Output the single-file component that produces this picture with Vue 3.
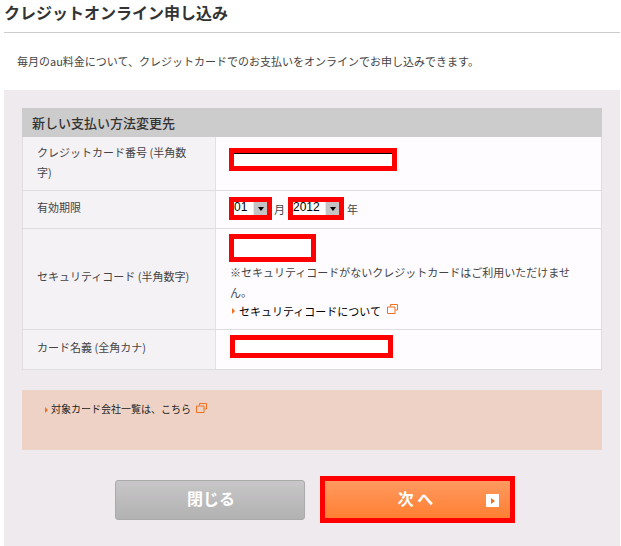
<template>
  <div class="page">
    <h1 class="title">クレジットオンライン申し込み</h1>
    <p class="lead">毎月のau料金について、クレジットカードでのお支払いをオンラインでお申し込みできます。</p>
    <section class="panel">
      <div class="form">
        <h2 class="form-head">新しい支払い方法変更先</h2>
        <div class="row row-card">
          <div class="label">クレジットカード番号 (半角数字)</div>
          <div class="field"><div class="box box-card"></div></div>
        </div>
        <div class="row row-exp">
          <div class="label">有効期限</div>
          <div class="field exp">
            <div class="box select sel-month"><span class="val">01</span><span class="arrow"><i></i></span></div>
            <span class="unit">月</span>
            <div class="box select sel-year"><span class="val">2012</span><span class="arrow"><i></i></span></div>
            <span class="unit">年</span>
          </div>
        </div>
        <div class="row row-sec">
          <div class="label">セキュリティコード (半角数字)</div>
          <div class="field sec">
            <div class="box box-sec"></div>
            <p class="note">※セキュリティコードがないクレジットカードはご利用いただけません。</p>
            <div class="link">
              <span class="tri"></span><span>セキュリティコードについて</span>
              <svg class="ext" width="11" height="10" viewBox="0 0 11 10"><path d="M3.5 .5h7v5.5h-2M3.5 .5v2M.5 3h7.5v6.5H.5z" fill="none" stroke="#f07020"/></svg>
            </div>
          </div>
        </div>
        <div class="row row-name">
          <div class="label">カード名義 (全角カナ)</div>
          <div class="field"><div class="box box-name"></div></div>
        </div>
      </div>
      <div class="callout">
        <span class="tri"></span><span>対象カード会社一覧は、こちら</span>
        <svg class="ext ext2" width="11" height="10" viewBox="0 0 11 10"><path d="M3.5 .5h7v5.5h-2M3.5 .5v2M.5 3h7.5v6.5H.5z" fill="none" stroke="#f07020"/></svg>
      </div>
      <div class="actions">
        <button class="btn close" type="button">閉じる</button>
        <div class="next-frame">
          <button class="btn next" type="button">次 へ<span class="go"><span class="go-tri"></span></span></button>
        </div>
      </div>
    </section>
  </div>
</template>

<script setup>
</script>

<style>
html, body { margin: 0; background: #fff; }
</style>

<style scoped>
.page {
  width: 621px;
  height: 546px;
  overflow: hidden;
  background: #fff;
  font-family: "Noto Sans CJK JP", "Liberation Sans", sans-serif;
  font-size: 11px;
  color: #444;
}
.title {
  margin: 0 1px 0 4px;
  height: 32px;
  border-bottom: 1px solid #ccc;
  font-size: 16px;
  font-weight: 700;
  line-height: 25px;
  color: #333;
}
.lead {
  margin: 0;
  padding-left: 17px;
  height: 57px;
  line-height: 56px;
  color: #444;
}
.panel {
  margin-left: 4px;
  width: 616px;
  height: 456px;
  padding: 18px 18px 0;
  box-sizing: border-box;
  background: #eeeaee;
}
.form { width: 580px; }
.form-head {
  margin: 0;
  height: 29px;
  padding-left: 10px;
  background: #ccc;
  font-size: 13px;
  font-weight: 500;
  line-height: 29px;
  color: #333;
}
.row {
  display: flex;
  box-sizing: border-box;
  border: 1px solid #e0dde0;
  border-top: 0;
  background: #fffcff;
}
.row-card { height: 54px; }
.row-exp { height: 38px; }
.row-sec { height: 101px; }
.row-name { height: 40px; }
.label {
  width: 193px;
  flex: none;
  display: flex;
  align-items: center;
  box-sizing: border-box;
  padding: 0 24px 6px 14px;
  background: #f5f2f6;
  border-right: 1px solid #e4e1e4;
  line-height: 20px;
}
.row-card .label { padding-bottom: 4px; }
.row-sec .label, .row-name .label { padding-right: 0; }
.field {
  flex: 1;
  min-width: 0;
  padding-left: 13px;
  line-height: 20px;
}
.box {
  box-sizing: border-box;
  border: 5px solid #f00;
  background: #fff;
}
.box-card { width: 168px; height: 23px; margin-top: 11px; box-shadow: inset 0 1px 0 #000; }
.exp { display: flex; align-items: flex-start; padding-top: 6px; }
.select { display: flex; height: 23px; color: #000; font-size: 12px; line-height: 11px; }
.sel-month { width: 43px; }
.sel-year { width: 56px; }
.val { flex: 1; min-width: 0; font-family: "Liberation Sans", sans-serif; }
.arrow {
  width: 14px;
  height: 13px;
  flex: none;
  display: flex;
  align-items: center;
  justify-content: center;
  background: #c4c4c4;
  border-left: 1px solid #e8e8e8;
  box-sizing: border-box;
}
.arrow i {
  border: 3.5px solid transparent;
  border-top: 4px solid #000;
  border-bottom: 0;
}
.unit { margin: 0 3px 0 2px; line-height: 24px; }
.unit:last-child { margin-left: 3px; }
.sec { padding-top: 5px; }
.box-sec { width: 87px; height: 28px; }
.note { margin: 0 0 0 1px; width: 350px; line-height: 20px; }
.link { margin-left: 1px; margin-top: -1px; color: #000; display: flex; align-items: center; height: 20px; }
.tri {
  display: inline-block;
  border-left: 3px solid #f07020;
  border-top: 3px solid transparent;
  border-bottom: 3px solid transparent;
  margin: 0 4px 0 2px;
}
.ext { margin-left: 6px; position: relative; top: -2px; }
.box-name { width: 163px; height: 23px; margin: 5px 0 0 1px; }
.callout {
  margin-top: 20px;
  width: 580px;
  height: 60px;
  box-sizing: border-box;
  padding: 11px 0 0 22px;
  background: #eed2c6;
  color: #222;
  font-size: 10px;
  line-height: 16px;
}
.callout .tri { margin: 0 3px 0 1px; }
.ext2 { margin-left: 5px; top: 0; }
.actions {
  display: flex;
  align-items: center;
  margin-top: 26px;
  padding-left: 93px;
}
.btn {
  display: block;
  border: 0;
  padding: 0;
  font-family: inherit;
  font-weight: 700;
  color: #fff;
}
.close {
  width: 190px;
  height: 40px;
  box-sizing: border-box;
  border: 1px solid #aaa;
  border-radius: 3px;
  padding: 0 0 3px 2px;
  background: linear-gradient(#c8c6c8, #b2b2b2);
  font-size: 16px;
}
.next-frame {
  margin-left: 15px;
  border: 5px solid #f00;
  display: flex;
}
.next {
  position: relative;
  width: 185px;
  height: 37px;
  padding: 0 4px 3px 0;
  background: linear-gradient(#ff9a60, #ff7f32);
  font-size: 16px;
}
.go {
  position: absolute;
  right: 11px;
  top: 13px;
  width: 13px;
  height: 13px;
  background: #fff;
  display: flex;
  align-items: center;
  justify-content: center;
}
.go-tri {
  border-left: 4px solid #f07020;
  border-top: 3px solid transparent;
  border-bottom: 3px solid transparent;
}
</style>
